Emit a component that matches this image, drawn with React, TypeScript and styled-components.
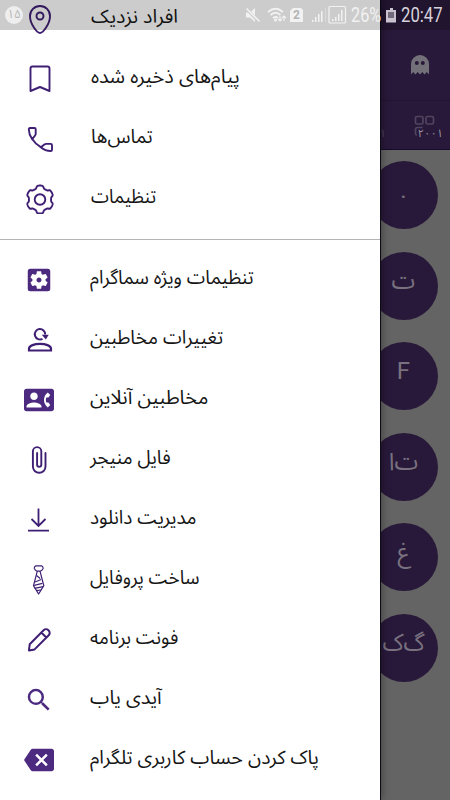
import { ReactNode, useLayoutEffect, useRef, useState } from "react";
import styled, { createGlobalStyle } from "styled-components";
import {
  MdBackspace,
  MdContactPhone,
  MdSearch,
  MdSettingsApplications,
} from "react-icons/md";

const GlobalStyle = createGlobalStyle`
  * {
    box-sizing: border-box;
  }
  body {
    margin: 0;
    font-family: "Noto Sans Arabic", "DejaVu Sans", sans-serif;
  }
`;

const Screen = styled.div`
  position: relative;
  width: 450px;
  height: 800px;
  overflow: hidden;
  background: #646464;
`;

const Header = styled.header`
  display: flex;
  flex-direction: column;
  height: 150px;
  padding-top: 30px;
  background: #28193a;
  border-bottom: 1px solid #180b2a;
`;

const Toolbar = styled.div`
  display: flex;
  justify-content: flex-end;
  height: 71px;
  padding: 25px 20px 0 0;
  border-bottom: 1px solid #211431;
`;

const TabBar = styled.div`
  display: flex;
  flex: 1;
  justify-content: flex-end;
  gap: 27px;
  padding: 13px 13px 0 0;
`;

const Tab = styled.div`
  position: relative;
  width: 24px;
  height: 24px;
`;

const TabCount = styled.span`
  position: absolute;
  top: 13px;
  right: -6px;
  color: #9a94a0;
  font-size: 11px;
  letter-spacing: -1.5px;
  line-height: 14px;
`;

const PlainCount = styled(TabCount)`
  right: 0;
  color: #50445f;
`;

const ChatList = styled.div`
  display: flex;
  flex-direction: column;
  align-items: flex-end;
  gap: 22.5px;
  padding: 11px 12.5px 0 0;
`;

const Avatar = styled.div`
  width: 68px;
  height: 68px;
  border-radius: 50%;
  background: #28193a;
  color: #79717f;
  font-family: Roboto, "Noto Sans Arabic", "DejaVu Sans", sans-serif;
  font-size: 24px;
  line-height: 59px;
  text-align: center;
  white-space: nowrap;
`;

const Drawer = styled.aside`
  position: absolute;
  top: 0;
  left: 0;
  width: 380px;
  height: 800px;
  background: #fff;
  box-shadow: 1px 0 0 #0d0915, 2px 0 8px rgba(0, 0, 0, 0.35);
`;

const MenuGroup = styled.div<{ $first?: boolean }>`
  margin-top: ${(props) => (props.$first ? "-11px" : "0")};
  padding: ${(props) => (props.$first ? "0 0 10px 1px" : "10px 0 0")};
  border-bottom: ${(props) => (props.$first ? "1px solid #b4b4b4" : "none")};
`;

const MenuItem = styled.div`
  display: flex;
  align-items: center;
  height: 60px;
  padding-left: 24px;
  color: #4b2a80;
`;

const IconSlot = styled.div`
  display: flex;
  width: 30px;
  height: 30px;
`;

const LabelSlot = styled.div<{ $width: number }>`
  width: ${(props) => props.$width}px;
  margin: 0 0 3px 36px;
  direction: ltr;
`;

const LabelText = styled.span`
  display: inline-block;
  color: #151515;
  font-size: 19px;
  line-height: 30px;
  white-space: nowrap;
  transform-origin: 0 50%;
`;

const StatusBar = styled.div`
  position: absolute;
  top: 0;
  left: 0;
  display: flex;
  align-items: center;
  width: 450px;
  height: 30px;
  padding: 0 7px 0 5px;
  background: rgba(0, 0, 0, 0.2);
  color: #f2f2f2;
`;

const Badge = styled.div`
  width: 18px;
  height: 18px;
  margin-right: auto;
  border-radius: 50%;
  background: #eee;
  color: #b8b8b8;
  font-size: 12px;
  line-height: 18px;
  text-align: center;
`;

const StatusIcons = styled.svg`
  width: 106px;
  height: 30px;
`;

const StatusText = styled.span<{ $width: number; $dim?: boolean }>`
  width: ${(props) => props.$width}px;
  color: ${(props) => (props.$dim ? "#d6d2da" : "#f2f2f2")};
  font-family: Roboto, sans-serif;
  font-size: 19.5px;
  line-height: 30px;
  padding-top: 2px;
  white-space: nowrap;
`;

const Stretch = styled.span`
  display: inline-block;
  transform-origin: 0 50%;
`;

const Line = ({ children }: { children: ReactNode }) => (
  <svg
    width="30"
    height="30"
    viewBox="0 0 30 30"
    fill="none"
    stroke="#3f1f74"
    strokeWidth="1.9"
    strokeLinejoin="round"
  >
    {children}
  </svg>
);

const PinIcon = () => (
  <Line>
    <path d="M15 29C12.500 29 5 20.500 5 12a10 10 0 0 1 20 0C25 20.500 17.500 29 15 29Z" />
    <circle cx="15" cy="12" r="3.500" />
  </Line>
);

const BookmarkIcon = () => (
  <Line>
    <path d="M5.500 27V4.500a2 2 0 0 1 2-2h15a2 2 0 0 1 2 2V27L15 23Z" />
  </Line>
);

const PhoneIcon = () => (
  <Line>
    <path d="M5 4h4.500q1.200 0 1.200 1.300v4.500q0 1-.6 1.700l-2.900 3.700C4.600 11.500 3.800 8.500 3.800 5.300Q3.800 4 5 4Z" />
    <path d="M7.400 15.200c2.300 3.600 4.700 5.900 8.400 8" />
    <path d="m15.800 23.200 3.600-2.700q.8-.6 1.800-.6h4.500q1.300 0 1.300 1.300v4.500q0 1.300-1.300 1.300c-3.500 0-6.800-1.200-9.900-3.800Z" />
  </Line>
);

// Six soft teeth, with one of them pointing up
const gearPath =
  Array.from({ length: 120 }, (_, i) => {
    const angle = (i / 120) * Math.PI * 2;
    const radius = 12.3 + 1.25 * Math.tanh(2.6 * Math.cos(6 * angle) + 0.4);
    const x = 15 + radius * Math.sin(angle);
    const y = 15.500 - radius * 1.03 * Math.cos(angle);
    return `${i ? "L" : "M"}${x.toFixed(2)} ${y.toFixed(2)}`;
  }).join("") + "Z";

const GearIcon = () => (
  <Line>
    <path d={gearPath} />
    <circle cx="15" cy="15.500" r="5.300" />
  </Line>
);

const ContactSyncIcon = () => (
  <Line>
    <path d="M18.500 13.800A5.200 5.200 0 1 1 21.200 9.500" strokeWidth="2" />
    <path d="M17.700 9.700h7l-2.800 4.800Z" fill="#3f1f74" stroke="none" />
    <path
      d="M5 25.500v-1.800c0-3 5.500-4.900 11-4.900s11 1.900 11 4.900v1.800Z"
      strokeWidth="2.200"
      strokeLinejoin="miter"
    />
  </Line>
);

const ClipIcon = () => (
  <Line>
    <path
      d="M21.500 8v13.500a6.300 6.300 0 0 1-12.600 0V6.300a4.200 4.200 0 0 1 8.400 0v13.500a2.100 2.100 0 0 1-4.200 0V8"
      strokeLinecap="round"
    />
  </Line>
);

const DownloadIcon = () => (
  <Line>
    <path
      d="M14.500 3.500v17M7.500 14l7 7 7-7M4 25.600h21"
      strokeWidth="1.800"
      strokeLinejoin="miter"
    />
  </Line>
);

const TieIcon = () => (
  <Line>
    <g strokeWidth="1.200">
      <path d="M11.800.8h5.800q1.800 1.200 1.500 2.600-.8 1.800-2.800 2.800h-3.200q-2-1-2.800-2.800-.3-1.400 1.500-2.600Z" />
      <path d="m13.300 6.200-3.800 14.400L14.600 29l5.200-8.400-3.800-14.400" />
      <path d="m12.500 10.500 3.700 3M11 17l6.200-2.500M10.200 20.300l8.200-2M10.500 23.300l8.400-1.700M12.300 25.600l4.600-.6" />
    </g>
  </Line>
);

const PencilIcon = () => (
  <Line>
    <path
      d="m5 24.800.7-5.500L19.600 5.200a3.400 3.400 0 0 1 4.800 0l.3.300a3.400 3.400 0 0 1 0 4.800L10.600 24.400 5 25.600ZM17.300 7.500l5 5"
      strokeWidth="2"
    />
  </Line>
);

const GhostIcon = () => (
  <svg width="20" height="21" viewBox="0 0 20 21" fill="#737079">
    <path d="M1 9a9 9 0 0 1 18 0v10.500L16.800 17l-2.200 2.500-2.300-2.500-2.300 2.500L7.700 17l-2.300 2.500L3.200 17 1 19.500Z" />
    <circle cx="6.800" cy="8" r="2" fill="#28193a" />
    <circle cx="12.800" cy="8" r="2" fill="#28193a" />
  </svg>
);

const GridIcon = () => (
  <svg width="24" height="24" fill="none" stroke="#50445f" strokeWidth="1.700">
    <rect x="2.500" y="2.500" width="7.500" height="7.500" rx="1.500" />
    <rect x="13" y="2.500" width="7.500" height="7.500" rx="1.500" />
    <path d="M9.500 13.500h-5q-2 0-2 2v4q0 1.500 1.500 1.500" />
  </svg>
);

interface IFitText {
  children: string;
  width: number;
}

// Squeezes or stretches a line so that it fills exactly the given width
function useFit(width: number) {
  const ref = useRef<HTMLSpanElement>(null);
  const [scale, setScale] = useState(1);

  useLayoutEffect(() => {
    if (ref.current) setScale(width / ref.current.offsetWidth);
  }, [width]);

  return { ref, style: { transform: `scaleX(${scale})` } };
}

function Label({ children, width }: IFitText) {
  const fit = useFit(width);
  return (
    <LabelSlot $width={width}>
      <LabelText dir="rtl" {...fit}>
        {children}
      </LabelText>
    </LabelSlot>
  );
}

function FitStatus({ children, width, dim }: IFitText & { dim?: boolean }) {
  const fit = useFit(width);
  return (
    <StatusText $width={width} $dim={dim}>
      <Stretch {...fit}>{children}</Stretch>
    </StatusText>
  );
}

const mainItems = [
  { icon: <PinIcon />, label: "افراد نزدیک", width: 87 },
  { icon: <BookmarkIcon />, label: "پیام‌های ذخیره شده", width: 149 },
  { icon: <PhoneIcon />, label: "تماس‌ها", width: 62 },
  { icon: <GearIcon />, label: "تنظیمات", width: 65 },
];

const extraItems = [
  {
    icon: <MdSettingsApplications size={30} />,
    label: "تنظیمات ویژه سماگرام",
    width: 164,
  },
  { icon: <ContactSyncIcon />, label: "تغییرات مخاطبین", width: 133 },
  { icon: <MdContactPhone size={30} />, label: "مخاطبین آنلاین", width: 118 },
  { icon: <ClipIcon />, label: "فایل منیجر", width: 81 },
  { icon: <DownloadIcon />, label: "مدیریت دانلود", width: 107 },
  { icon: <TieIcon />, label: "ساخت پروفایل", width: 110 },
  { icon: <PencilIcon />, label: "فونت برنامه", width: 88 },
  { icon: <MdSearch size={30} />, label: "آیدی یاب", width: 72 },
  {
    icon: <MdBackspace size={30} />,
    label: "پاک کردن حساب کاربری تلگرام",
    width: 229,
  },
];

const avatars = [".", "ت", "F", "ت‌ا", "غ", "گ‌ک"];

export default function App() {
  return (
    <Screen>
      <GlobalStyle />
      <Header>
        <Toolbar>
          <GhostIcon />
        </Toolbar>
        <TabBar>
          <Tab>
            <PlainCount>۱</PlainCount>
          </Tab>
          <Tab>
            <GridIcon />
            <TabCount>۲۰۰۱</TabCount>
          </Tab>
        </TabBar>
      </Header>
      <ChatList>
        {avatars.map((letter) => (
          <Avatar key={letter}>{letter}</Avatar>
        ))}
      </ChatList>
      <Drawer>
        <MenuGroup $first>
          {mainItems.map((item) => (
            <MenuItem key={item.label}>
              <IconSlot>{item.icon}</IconSlot>
              <Label width={item.width}>{item.label}</Label>
            </MenuItem>
          ))}
        </MenuGroup>
        <MenuGroup>
          {extraItems.map((item) => (
            <MenuItem key={item.label}>
              <IconSlot>{item.icon}</IconSlot>
              <Label width={item.width}>{item.label}</Label>
            </MenuItem>
          ))}
        </MenuGroup>
      </Drawer>
      <StatusBar>
        <Badge>۱۵</Badge>
        <StatusIcons viewBox="0 0 106 30" fill="#f2f2f2">
          <path d="M1 12.500h4l5-4.500v14l-5-4.500H1Z" />
          <path d="m1 8 13 14" stroke="#cbcbcb" strokeWidth="3" />
          <path d="m1.500 8.500 13 13" stroke="#f2f2f2" strokeWidth="1.600" />
          <g fill="none" stroke="#f2f2f2" strokeWidth="1.700">
            <path d="M23 12q7.500-6.500 15 0M25.500 15q5-4.500 10 0M28 18q2.500-2 5 0" />
            <path d="M35 16v5m-2-2 2 2 2-2M39 21v-5m-2 2 2-2 2 2" strokeWidth="1.200" />
          </g>
          <circle cx="30.500" cy="20" r="1.500" />
          <path d="M48 8h8l2 2v12H45V11Z" />
          <text
            x="48"
            y="19"
            fill="#b4b4b4"
            fontFamily="Roboto"
            fontSize="12"
            fontWeight="700"
          >
            2
          </text>
          <path d="M67 20h1.500v2H67Zm3-3h1.500v5H70Zm3-3h1.500v8H73Zm3-3h1.500v11H76Z" />
          <path d="M80 8h1v14h-1Z" opacity=".35" />
          <rect
            x="84"
            y="6.500"
            width="16.500"
            height="16.500"
            rx="1"
            fill="none"
            stroke="#f2f2f2"
            strokeWidth="1.200"
          />
          <path d="M87 19h1.500v2H87Zm3-2h1.500v4H90Zm3-3h1.500v7H93Zm3-4h1.500v11H96Z" />
        </StatusIcons>
        <FitStatus width={30}>26%</FitStatus>
        <svg width="20" height="30" viewBox="0 0 20 30">
          <path d="M9 8h3v2h3v12.500H5V10h4Z" fill="#c9c3cf" />
          <path d="M7 12h6v6H7Z" fill="#736a7c" />
        </svg>
        <FitStatus width={42} dim>
          20:47
        </FitStatus>
      </StatusBar>
    </Screen>
  );
}
